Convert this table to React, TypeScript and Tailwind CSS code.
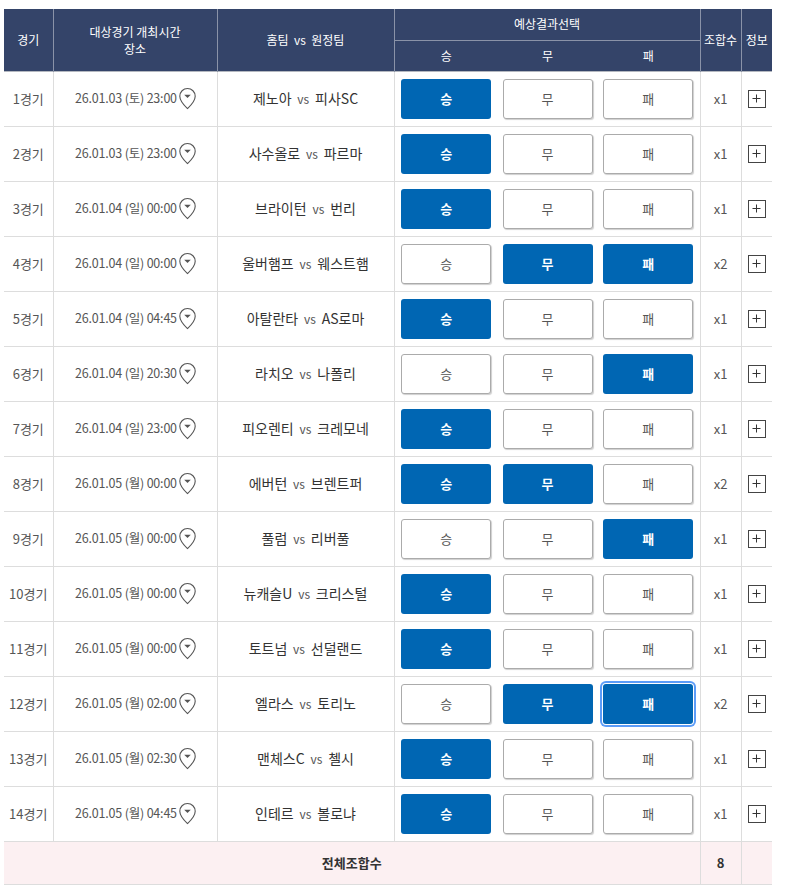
import React, { useState } from 'react';

type Pick = 'W' | 'D' | 'L';

interface Game {
    date: string;
    home: string;
    away: string;
    picks: Pick[];
}

const games: Game[] = [
    { date: '26.01.03 (토) 23:00', home: '제노아', away: '피사SC', picks: ['W'] },
    { date: '26.01.03 (토) 23:00', home: '사수올로', away: '파르마', picks: ['W'] },
    { date: '26.01.04 (일) 00:00', home: '브라이턴', away: '번리', picks: ['W'] },
    { date: '26.01.04 (일) 00:00', home: '울버햄프', away: '웨스트햄', picks: ['D', 'L'] },
    { date: '26.01.04 (일) 04:45', home: '아탈란타', away: 'AS로마', picks: ['W'] },
    { date: '26.01.04 (일) 20:30', home: '라치오', away: '나폴리', picks: ['L'] },
    { date: '26.01.04 (일) 23:00', home: '피오렌티', away: '크레모네', picks: ['W'] },
    { date: '26.01.05 (월) 00:00', home: '에버턴', away: '브렌트퍼', picks: ['W', 'D'] },
    { date: '26.01.05 (월) 00:00', home: '풀럼', away: '리버풀', picks: ['L'] },
    { date: '26.01.05 (월) 00:00', home: '뉴캐슬U', away: '크리스털', picks: ['W'] },
    { date: '26.01.05 (월) 00:00', home: '토트넘', away: '선덜랜드', picks: ['W'] },
    { date: '26.01.05 (월) 02:00', home: '엘라스', away: '토리노', picks: ['D', 'L'] },
    { date: '26.01.05 (월) 02:30', home: '맨체스C', away: '첼시', picks: ['W'] },
    { date: '26.01.05 (월) 04:45', home: '인테르', away: '볼로냐', picks: ['W'] },
];

const labels: Record<Pick, string> = { W: '승', D: '무', L: '패' };

function Pin() {
    return (
        <svg width="19" height="23" viewBox="0 0 19 23" className="shrink-0">
            <path
                d="M9.5 21.6C9.5 21.6 1.8 14.2 1.8 9.2A7.7 7.7 0 0 1 17.2 9.2C17.2 14.2 9.5 21.6 9.5 21.6Z"
                fill="none"
                stroke="#555"
                strokeWidth="1.1"
            />
            <path d="M6.2 7.8H12.8L9.5 11.1Z" fill="#555" />
        </svg>
    );
}

export default function App() {
    const [picks, setPicks] = useState<Pick[][]>(games.map((g) => g.picks));
    const [focus, setFocus] = useState<string>('11-L');

    const toggle = (i: number, p: Pick) => {
        setFocus(`${i}-${p}`);
        setPicks((prev) =>
            prev.map((row, idx) =>
                idx !== i ? row : row.includes(p) ? row.filter((x) => x !== p) : [...row, p]
            )
        );
    };

    const total = picks.reduce((acc, row) => acc * Math.max(row.length, 1), 1);

    return (
        <div className="min-h-[896px] bg-white pt-[9px] pl-[4px] font-['Noto_Sans_CJK_KR','Noto_Sans',sans-serif]">
            <table className="w-[768px] table-fixed border-collapse text-[13px] text-[#555]">
                <colgroup>
                    <col className="w-[49px]" />
                    <col className="w-[164px]" />
                    <col className="w-[177px]" />
                    <col className="w-[104px]" />
                    <col className="w-[99px]" />
                    <col className="w-[103px]" />
                    <col className="w-[41px]" />
                    <col className="w-[31px]" />
                </colgroup>
                <thead className="border-b border-[#b4b8c0] bg-[#344469] text-[12px] text-white">
                    <tr className="h-[31px]">
                        <th rowSpan={2} className="border-r border-[#8a93a8] font-normal">경기</th>
                        <th rowSpan={2} className="border-r border-[#8a93a8] font-normal leading-[17px]">
                            대상경기 개최시간
                            <br />
                            장소
                        </th>
                        <th rowSpan={2} className="border-r border-[#8a93a8] font-normal">홈팀 &nbsp;vs&nbsp; 원정팀</th>
                        <th colSpan={3} className="border-r border-b border-[#8a93a8] font-normal">예상결과선택</th>
                        <th rowSpan={2} className="border-r border-[#8a93a8] font-normal">조합수</th>
                        <th rowSpan={2} className="font-normal">정보</th>
                    </tr>
                    <tr className="h-[31px]">
                        <th className="font-normal">승</th>
                        <th className="font-normal">무</th>
                        <th className="border-r border-[#8a93a8] font-normal">패</th>
                    </tr>
                </thead>
                <tbody>
                    {games.map((g, i) => (
                        <tr key={i} className="h-[55px] border-b border-[#dddddd]">
                            <td className="border-r border-[#dddddd] text-center">{i + 1}경기</td>
                            <td className="border-r border-[#dddddd]">
                                <div className="flex items-center justify-center gap-[1px] pl-[2px] text-[12.5px] tracking-[-0.2px]">
                                    <span>{g.date}</span>
                                    <Pin />
                                </div>
                            </td>
                            <td className="border-r border-[#dddddd] text-center text-[14px] text-[#333]">
                                {g.home} <span className="text-[12px] text-[#555]">&nbsp;vs&nbsp;</span> {g.away}
                            </td>
                            {(['W', 'D', 'L'] as Pick[]).map((p) => {
                                const on = picks[i].includes(p);
                                const focused = focus === `${i}-${p}`;
                                return (
                                    <td key={p} className={p === 'L' ? 'border-r border-[#dddddd]' : ''}>
                                        <button
                                            onClick={() => toggle(i, p)}
                                            className={`mx-auto flex h-[40px] w-[90px] items-center justify-center rounded-[3px] text-[13px] outline-none ${
                                                on
                                                    ? 'bg-[#0066b3] font-bold text-white'
                                                    : 'border border-[#ababab] bg-white text-[#555] shadow-[1px_1px_1px_0px_#cfcfcf]'
                                            } ${focused ? 'ring-2 ring-[#5b9cf8] ring-offset-1' : ''}`}
                                        >
                                            {labels[p]}
                                        </button>
                                    </td>
                                );
                            })}
                            <td className="border-r border-[#dddddd] text-center">x{Math.max(picks[i].length, 1)}</td>
                            <td className="text-center">
                                <button className="mx-auto flex h-[18px] w-[18px] items-center justify-center border border-[#444] bg-white text-[#333]">
                                    <svg width="9" height="9" viewBox="0 0 9 9">
                                        <path d="M4.5 0.5V8.5M0.5 4.5H8.5" stroke="#333" strokeWidth="1" />
                                    </svg>
                                </button>
                            </td>
                        </tr>
                    ))}
                    <tr className="h-[43px] border-b border-[#dddddd] bg-[#fcf0f2] text-[#333]">
                        <td colSpan={6} className="border-r border-[#dddddd] text-center font-bold">전체조합수</td>
                        <td className="border-r border-[#dddddd] text-center font-bold">{total}</td>
                        <td />
                    </tr>
                </tbody>
            </table>
        </div>
    );
}
